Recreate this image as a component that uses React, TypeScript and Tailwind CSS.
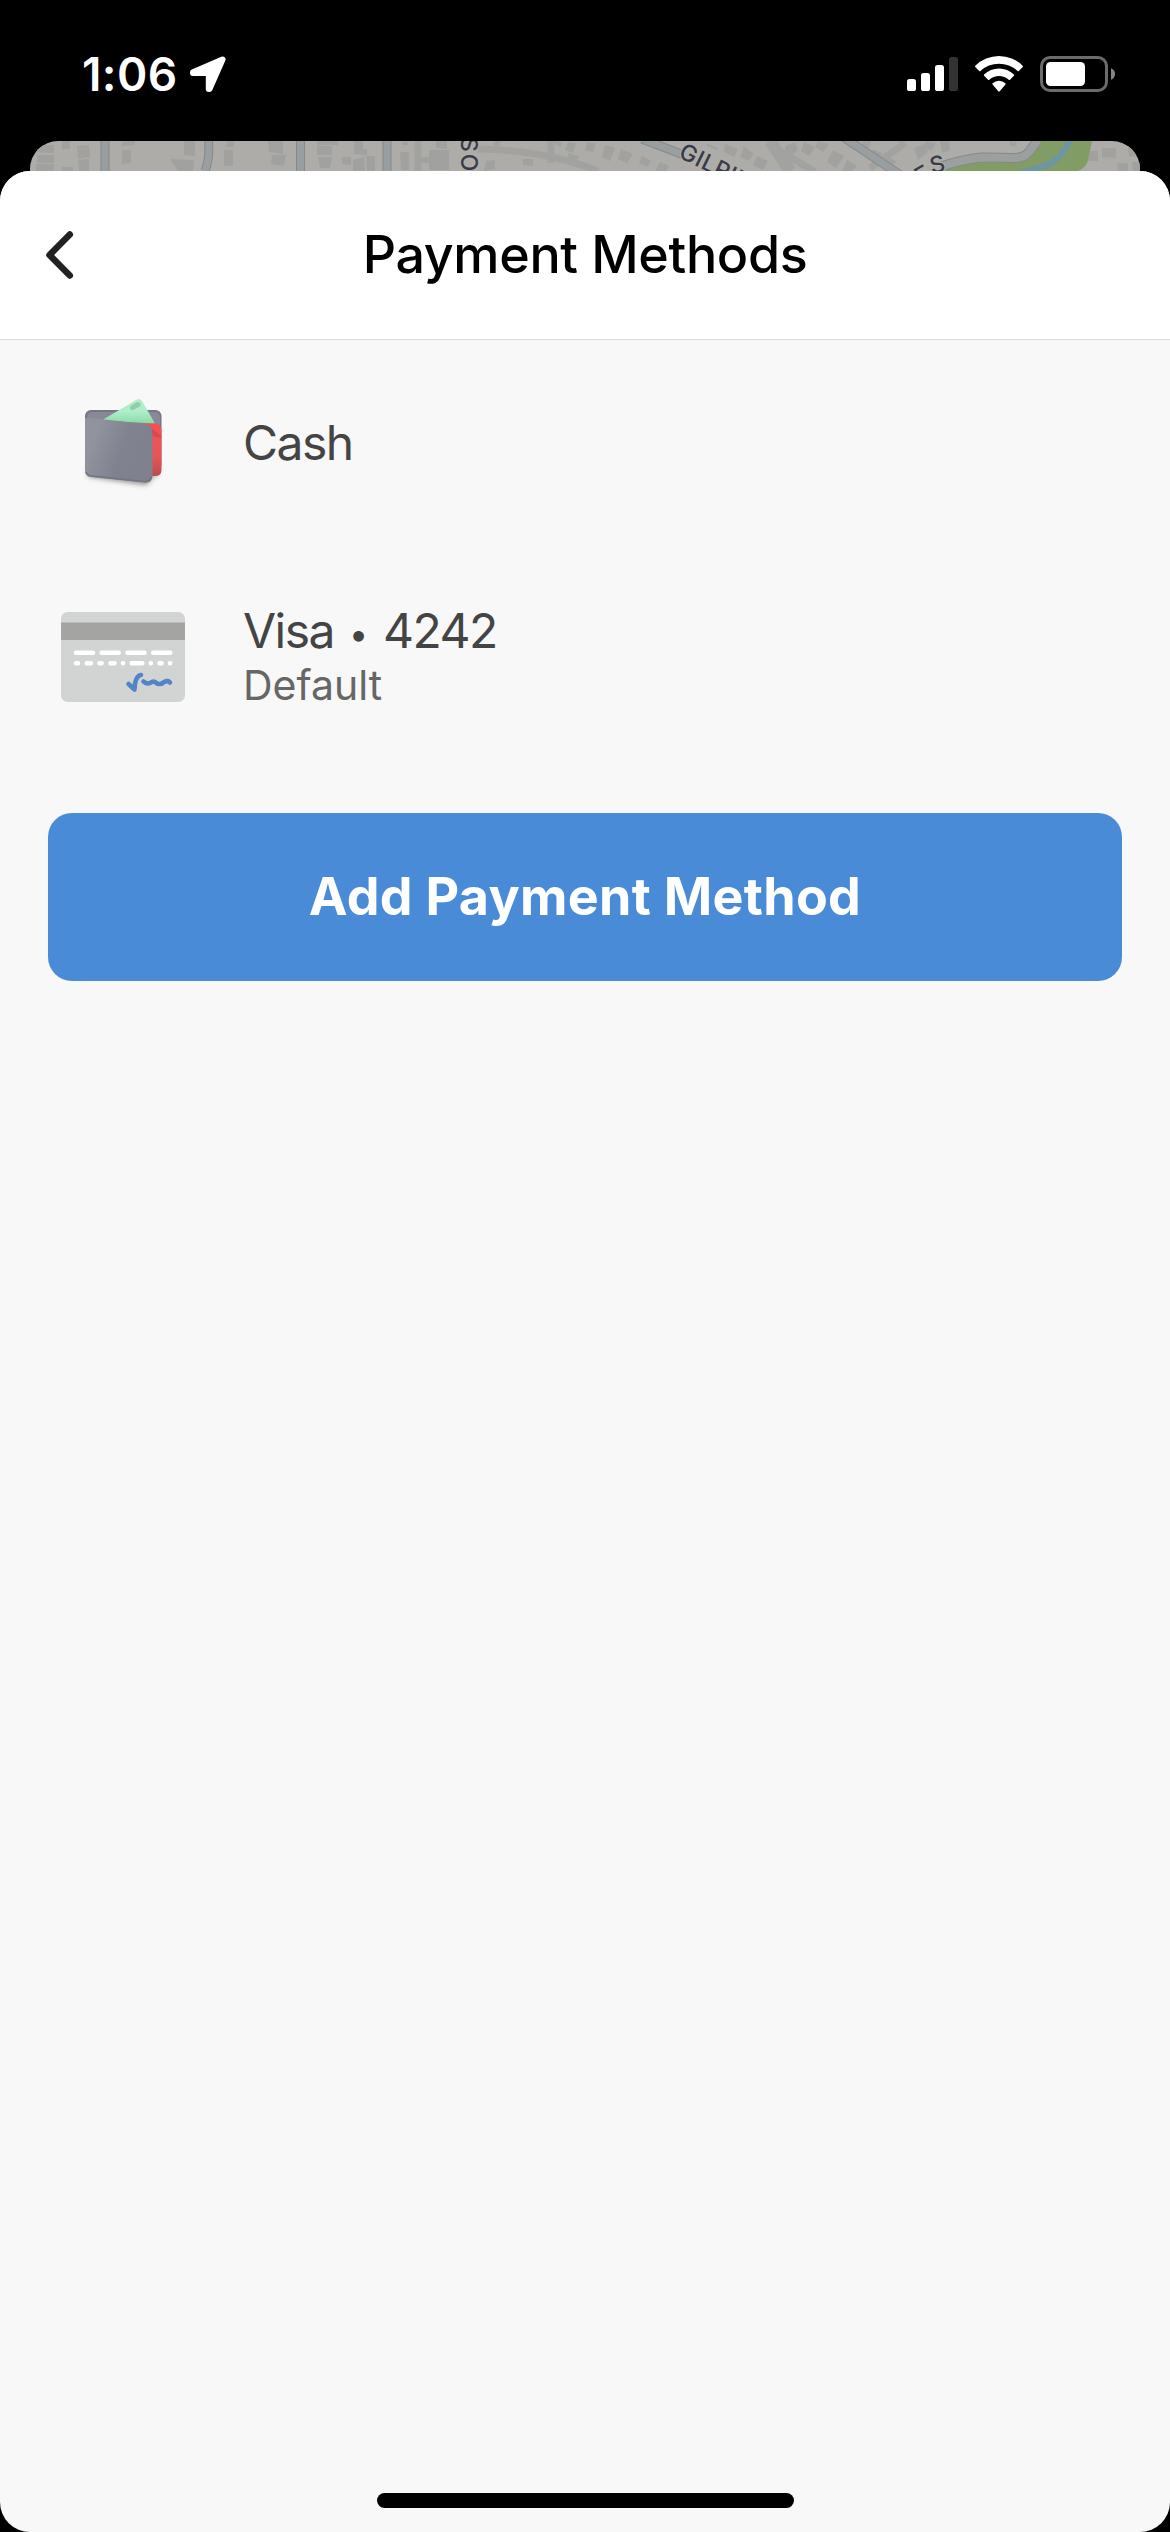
import type { ReactNode } from "react";

function LocationArrow() {
  return (
    <svg className="ml-[11px] h-[38px] w-[38px]" viewBox="188 56 38 38">
      <path
        d="M221.5 60.5 L192 73.2 V74 L207.8 74 V90 L208.5 90 Z"
        fill="#fff"
        stroke="#fff"
        strokeWidth="6"
        strokeLinejoin="round"
      />
    </svg>
  );
}

function Signal() {
  return (
    <svg className="h-[36px] w-[52px]" viewBox="907 56 52 36" fill="#fff">
      <rect x="907" y="79" width="9" height="12" rx="2.6" />
      <rect x="921" y="73" width="9" height="18" rx="2.6" />
      <rect x="935" y="65" width="9" height="26" rx="2.6" />
      <rect x="949" y="57" width="9" height="34" rx="2.6" fill="#333" />
    </svg>
  );
}

function Wifi() {
  return (
    <svg className="ml-4 h-[38px] w-[49px]" viewBox="975 54 49 38" fill="#fff">
      <path d="M975.3 64.7 A33.8 33.8 0 0 1 1022.7 64.7 Q1023.3 65.4 1022.7 66 L1018.8 70 Q1018.3 70.5 1017.6 70 A27.2 27.2 0 0 0 980.4 70 Q979.7 70.5 979.2 70 L975.3 66 Q974.7 65.4 975.3 64.7Z" />
      <path d="M984.1 73.5 A21.5 21.5 0 0 1 1013.9 73.5 Q1014.5 74.1 1013.9 74.8 L1010 78.7 Q1009.4 79.3 1008.7 78.7 A14.6 14.6 0 0 0 989.3 78.7 Q988.6 79.3 988 78.7 L984.1 74.8 Q983.5 74.1 984.1 73.5Z" />
      <path d="M992.6 82.3 A9.4 9.4 0 0 1 1005.4 82.3 Q1006 83 1005.4 83.6 L999.7 90.3 Q999 91 998.3 90.3 L992.6 83.6 Q992 83 992.6 82.3Z" />
    </svg>
  );
}

function Battery() {
  return (
    <svg className="ml-4 h-[38px] w-[76px]" viewBox="1040 55 76 38">
      <rect x="1041.5" y="57.5" width="65" height="33" rx="8.5" fill="none" stroke="#6b6b6b" strokeWidth="3" />
      <rect x="1046" y="62" width="39" height="24" rx="4.5" fill="#fff" />
      <path d="M1111 68.3 Q1115 70 1115 74 Q1115 78 1111 79.7Z" fill="#858585" />
    </svg>
  );
}

function StatusBar() {
  return (
    <div className="flex h-[141px] items-start justify-between pl-[82px] pr-[54px]">
      <div className="flex items-center pt-[55px]">
        <span className="text-[46px] leading-[38px] font-semibold tracking-[0.4px] text-white">1:06</span>
        <LocationArrow />
      </div>
      <div className="flex items-center pt-[55px]">
        <Signal />
        <Wifi />
        <Battery />
      </div>
    </div>
  );
}

const buildings =
  "M36 145h18v8l-18-1z M37 155h17v8h-17z M36 164h18v7h-18z M62 141h8v8h-8z M77 146l12-1 1 12-12 2z M78 160l11-1v12h-10z M62 167h11v4h-11z M122 142l13-2v5l-14 1z M122 150h9v13l-9 1z M184 141h11v15l-11-1z M170 159l24 1-1 11h-15z M227 141h7v6h-8z M224 150h9v16h-9z M268 141h15v13l-14-2z M272 155h14l-2 11-13-2z M317 141h21v4h-21z M317 146h15v9h-15z M318 157h14l-2 11h-10z M354 141h9v8h4v6l-13-1z M342 157h9v8l-9-1z M353 160l11-3 1 14h-12z M366 156h9v15h-8z M400 152h9v18h-8z M402 142h6v3h-6z M436 141h11v8l-11-1z M429 150h20v20h-20z M422 157h9v6h-9z M495 141h6l-2 5-6-1z M486 161l9-1v9l-11 2z M523 159h10v7l-10-1z M549 141l13 1-1 5z M568 142l8 1-3 10-8-3z M587 142l9 1-3 9-8-2z M568 153l11 3-3 6-8-3z M605 145l10 3-5 13-8-4z M621 149l12 5-6 9-9-4z M642 156l9 5-4 6-8-4z M660 162l9 4-3 5h-11z M706 143l12 5-2 2-9-4z M725 144l13 5-4 8-10-5z M744 146l10 8-5 7-9-4z M757 156l11 5-5 9-10-5z M785 146l10-4 3 8-6 5-7-4z M804 142l11 5-6 9-8-5z M818 141l11 3-6 8-8-5z M833 150l11 6-8 12-9-6z M847 160l10 6-5 5h-10z M852 142l10 4-3 5-10-4z M862 142l9-1-2 7-6-1z M873 149l9 4-3 8-8-4z M886 156l10 5-4 7-9-5z M899 141l7 2-3 4-6-2z M914 148l10-4 4 8-10 8z M926 141l10 2-5 8-7-5z M940 141l9 1 1 8-8 3z M951 164l11 3-2 4h-12z M1010 141l7 1-2 5-6-2z M1090 151h8v10h-10z M1102 148h14v10l-14-1z M1128 145h10l2 10-11 2z M1117 163h11v8h-10z M1132 162h8v9h-7z";

/* Dimmed street map peeking out behind the sheet. */
function MapStrip() {
  return (
    <svg className="mx-[30px] h-[60px] w-[1110px] shrink-0 rounded-t-[28px]" viewBox="30 141 1110 60">
      <rect x="30" y="141" width="1110" height="60" fill="#adaca8" />
      <path d={buildings} fill="#a1a19f" />
      <g fill="none" stroke="#a2a2a0" strokeWidth="7">
        <path d="M418 141V171 M551 141v22 M478 149 Q545 150 598 171" />
        <path d="M780 151 L815 172 M870 168 L905 143" />
        <path d="M770 141 L790 171" strokeWidth="12" />
      </g>
      <g fill="none" stroke="#85898a" strokeWidth="9">
        <path d="M105 141V171 M208.500 141 Q210 158 205 171 M300.500 141V171 M387 141V171" />
        <path d="M642 139 L684 155 M840 135 L902 176" />
      </g>
      <g fill="none" stroke="#999fa0" strokeWidth="7">
        <path d="M105 141V171 M208.500 141 Q210 158 205 171 M300.500 141V171 M387 141V171" />
        <path d="M642 139 L684 155 M840 135 L902 176" />
      </g>
      <path d="M1040 141H1092 L1088 160 Q1087 167 1078 171H944 L958 165 L982 159 L1022 160 L1032 153Z" fill="#829c65" />
      <path d="M940 167 Q960 160 981 157.500 L1015 158 Q1024 158 1029 152 L1038 140" fill="none" stroke="#858a8b" strokeWidth="10" />
      <path d="M940 167 Q960 160 981 157.500 L1015 158 Q1024 158 1029 152 L1038 140" fill="none" stroke="#9b9fa0" strokeWidth="8" />
      <path d="M1020 173 Q1045 167 1054 161 Q1065 152 1070 140" fill="none" stroke="#6d95a4" strokeWidth="6" />
      <g fill="#3a3b48" stroke="#b1b0ac" strokeWidth="2" paintOrder="stroke" fontSize="23" fontFamily="Inter, sans-serif">
        <text transform="translate(460.500 137) rotate(90)" letterSpacing="2" fontWeight="500">SO</text>
        <text transform="translate(677.500 157) rotate(26)" letterSpacing="0.6" fontWeight="500">GILPIN</text>
        <text transform="translate(920 185) rotate(-29)" fontWeight="500">E</text>
        <text transform="translate(932 174) rotate(-14)" fontWeight="500">S</text>
      </g>
    </svg>
  );
}

function WalletIcon() {
  return (
    <svg className="h-[96px] w-[90px]" viewBox="79 396 90 96">
      <defs>
        <linearGradient id="front" x1="0" y1="0" x2="1" y2="0.35">
          <stop offset="0.2" stopColor="#91949e" />
          <stop offset="0.65" stopColor="#80838f" />
          <stop offset="1" stopColor="#7f828e" />
        </linearGradient>
        <linearGradient id="bill" x1="0" y1="0" x2="0" y2="1">
          <stop offset="0.5" stopColor="#b0eecb" />
          <stop offset="1" stopColor="#88dba8" />
        </linearGradient>
        <linearGradient id="lining" x1="0" y1="0" x2="0" y2="1">
          <stop offset="0" stopColor="#f05254" />
          <stop offset="0.6" stopColor="#e65659" />
          <stop offset="1" stopColor="#bb4b50" />
        </linearGradient>
        <filter id="shade" x="-20%" y="-20%" width="140%" height="150%">
          <feGaussianBlur stdDeviation="2.5" />
        </filter>
      </defs>
      <path d="M89 465 V477 L145 485 Q150 485 153 478 L161 473Z" fill="#555" opacity="0.6" filter="url(#shade)" />
      <rect x="86" y="410" width="76.500" height="60" rx="6" fill="#747783" />
      <rect x="88" y="412" width="73" height="50" rx="5" fill="#878a96" />
      <path d="M102.500 420.500 L137.500 399.800 Q141 397.500 143 401 L156 423.500Z" fill="url(#bill)" />
      <path d="M133.500 407.700 L139 404.500" stroke="#91cfaa" strokeWidth="5" strokeLinecap="round" />
      <path d="M138 423.500 H158 Q162.500 425 162.500 430 V470 Q162.500 476 156 476 H148Z" fill="url(#lining)" />
      <path d="M151 427 L162 436 V438 L152 436Z" fill="#d9484c" />
      <path d="M86 418 Q87 417.500 90 417.800 L146 424 Q153.500 425 153.500 434 V475 Q153.500 483.500 145 482.600 L92 477 Q86 476.500 86 470Z" fill="url(#front)" />
      <path d="M87 472 Q88 475.500 92 476 L145 481.600 Q151 482 152.600 477" fill="none" stroke="#737580" strokeWidth="1.500" />
    </svg>
  );
}

function CardIcon() {
  return (
    <svg className="h-[90px] w-[124px]" viewBox="61 612 124 90">
      <rect x="61" y="612" width="124" height="90" rx="6.500" fill="#d2d4d3" />
      <rect x="61" y="622.500" width="124" height="17.500" fill="#a4a4a2" />
      <g stroke="#fff" strokeWidth="4.600" strokeLinecap="round">
        <path d="M76 652.700h17 M101.700 652.700h17 M127.500 652.700h17 M153.200 652.700h17" />
        <path d="M76 663.300h2 M86.800 663.300h4 M99.500 663.300h2 M110.500 663.300h4 M123 663.300h0.100 M131.700 663.300h10.600 M150.800 663.300h0.100 M159.500 663.300h2 M170 663.300h0.100" />
      </g>
      <path
        d="M128.500 684 L134.500 689.500 Q135 676 141 675 M143.500 681.500 Q147 684.500 150 683 Q154 680 157 683.500 Q161 685 164 682 Q168 680 170 682.500"
        fill="none"
        stroke="#5484c8"
        strokeWidth="4.600"
        strokeLinecap="round"
        strokeLinejoin="round"
      />
    </svg>
  );
}

function MethodRow({ icon, children }: { icon: ReactNode; children: ReactNode }) {
  return (
    <li className="flex items-center pl-[61px]">
      <div className="flex w-[124px] shrink-0 justify-center">{icon}</div>
      <div className="ml-[58px] flex flex-col pb-[2px]">{children}</div>
    </li>
  );
}

export default function App() {
  return (
    <div className="flex h-[2532px] w-[1170px] flex-col overflow-hidden bg-black font-['Inter',sans-serif]">
      <StatusBar />
      <MapStrip />
      <main className="relative -mt-[30px] flex flex-1 flex-col overflow-hidden rounded-[30px] bg-[#f8f8f8]">
        <header className="grid h-[169px] grid-cols-[120px_1fr_120px] items-center border-b border-[#dcdcdc] bg-white">
          <button aria-label="Back" className="pl-[43px]">
            <svg className="h-[52px] w-[34px]" viewBox="43 229 34 52">
              <path
                d="M69.800 234.500 L49.500 255 L69.800 275.500"
                fill="none"
                stroke="#222"
                strokeWidth="6.500"
                strokeLinecap="round"
                strokeLinejoin="round"
              />
            </svg>
          </button>
          <h1 className="text-center text-[52px] leading-[64px] font-medium tracking-[-0.35px] whitespace-nowrap text-black">
            Payment Methods
          </h1>
        </header>
        <ul className="grid grid-rows-[208px_218px]">
          <MethodRow icon={<WalletIcon />}>
            <span className="text-[48px] leading-[58px] tracking-[-1.5px] text-[#444]">Cash</span>
          </MethodRow>
          <MethodRow icon={<CardIcon />}>
            <span className="text-[48px] leading-[58px] tracking-[-1.5px] whitespace-nowrap text-[#444]">
              Visa{" "}
              <span className="inline-block w-[25px] -translate-y-[2px] text-center text-[34px] leading-none tracking-normal">
                •
              </span>{" "}
              4242
            </span>
            <span className="text-[41px] leading-[50px] text-[#666]">Default</span>
          </MethodRow>
        </ul>
        <button className="mx-12 mt-[47px] h-[168px] rounded-[24px] bg-[#4a8bd8] text-[52px] font-bold tracking-[0.3px] text-white">
          Add Payment Method
        </button>
        <div className="mx-auto mt-auto mb-6 h-[15px] w-[417px] rounded-full bg-black" />
      </main>
    </div>
  );
}
